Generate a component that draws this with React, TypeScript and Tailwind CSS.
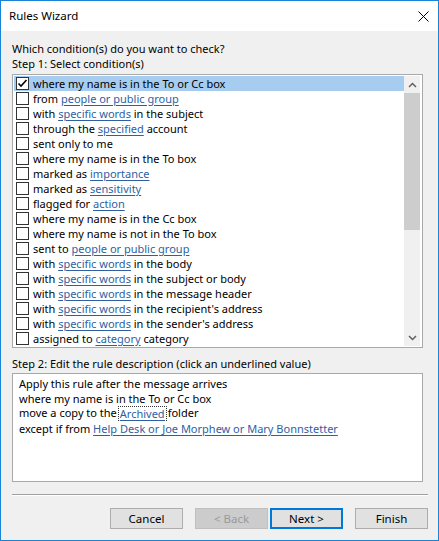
import React from 'react'

type Part = string | { link: string }

const conditions: Part[][] = [
  ['where my name is in the To or Cc box'],
  ['from ', { link: 'people or public group' }],
  ['with ', { link: 'specific words' }, ' in the subject'],
  ['through the ', { link: 'specified' }, ' account'],
  ['sent only to me'],
  ['where my name is in the To box'],
  ['marked as ', { link: 'importance' }],
  ['marked as ', { link: 'sensitivity' }],
  ['flagged for ', { link: 'action' }],
  ['where my name is in the Cc box'],
  ['where my name is not in the To box'],
  ['sent to ', { link: 'people or public group' }],
  ['with ', { link: 'specific words' }, ' in the body'],
  ['with ', { link: 'specific words' }, ' in the subject or body'],
  ['with ', { link: 'specific words' }, ' in the message header'],
  ['with ', { link: 'specific words' }, " in the recipient's address"],
  ['with ', { link: 'specific words' }, " in the sender's address"],
  ['assigned to ', { link: 'category' }, ' category'],
]

function Link({ children }: { children: React.ReactNode }) {
  return <span className="text-[#2e5fa3] underline underline-offset-[2px]">{children}</span>
}

function Checkbox({ checked }: { checked?: boolean }) {
  return (
    <span className="w-[13px] h-[13px] border border-[#333333] bg-white flex items-center justify-center shrink-0">
      {checked && (
        <svg width="11" height="11" viewBox="0 0 11 11">
          <path d="M1.5 5.5 L4 8 L9.5 2" fill="none" stroke="#000" strokeWidth="1.6" />
        </svg>
      )}
    </span>
  )
}

function Button({ children, disabled, focused }: { children: React.ReactNode; disabled?: boolean; focused?: boolean }) {
  const cls = disabled
    ? 'bg-[#cccccc] border border-[#bfbfbf] text-[#9a9a9a]'
    : focused
    ? 'bg-[#e1e1e1] border-2 border-[#0078d7] text-black'
    : 'bg-[#e1e1e1] border border-[#adadad] text-black'
  return (
    <div className={`w-[73px] h-[21px] flex items-center justify-center text-[11.5px] ${cls}`}>{children}</div>
  )
}

export default function App() {
  return (
    <div
      className="w-[439px] h-[541px] border border-[#1883d7] bg-[#f0f0f0] flex flex-col text-[11px] text-black"
      style={{ fontFamily: '"Segoe UI", "Noto Sans", sans-serif' }}
    >
      {/* Title bar */}
      <div className="h-[30px] bg-white flex items-center justify-between pl-[8px] pr-[9px] shrink-0">
        <span className="text-[11.5px]">Rules Wizard</span>
        <svg width="11" height="11" viewBox="0 0 11 11">
          <path d="M0.5 0.5 L10.5 10.5 M10.5 0.5 L0.5 10.5" stroke="#000" strokeWidth="1" />
        </svg>
      </div>

      <div className="flex-1 flex flex-col pl-[11px] pr-[10px] pt-[10px]">
        <div className="leading-[15px]">Which condition(s) do you want to check?</div>
        <div className="leading-[15px]">Step 1: Select condition(s)</div>

        {/* Conditions list */}
        <div className="mt-[3px] w-[411px] h-[274px] border border-[#a9a9a9] bg-white p-[1px] flex">
          <div className="flex-1 flex flex-col">
            {conditions.map((parts, i) => (
              <div
                key={i}
                className={`h-[15px] flex items-center pl-[2px] leading-[15px] whitespace-nowrap ${i === 0 ? 'bg-[#a6cdf0]' : ''}`}
              >
                <Checkbox checked={i === 0} />
                <span className="ml-[4px] leading-[14px]">
                  {parts.map((p, j) =>
                    typeof p === 'string' ? <span key={j}>{p}</span> : <Link key={j}>{p.link}</Link>
                  )}
                </span>
              </div>
            ))}
          </div>
          <div className="w-[16px] mr-[1px] bg-[#f0f0f0] flex flex-col">
            <div className="h-[17px] flex items-center justify-center">
              <svg width="9" height="6" viewBox="0 0 9 6">
                <path d="M1 5 L4.5 1.5 L8 5" fill="none" stroke="#606060" strokeWidth="1.5" />
              </svg>
            </div>
            <div className="h-[137px] bg-[#cdcdcd]" />
            <div className="flex-1" />
            <div className="h-[17px] flex items-center justify-center">
              <svg width="9" height="6" viewBox="0 0 9 6">
                <path d="M1 1 L4.5 4.5 L8 1" fill="none" stroke="#606060" strokeWidth="1.5" />
              </svg>
            </div>
          </div>
        </div>

        <div className="mt-[8px] leading-[15px]">Step 2: Edit the rule description (click an underlined value)</div>

        {/* Description box */}
        <div className="mt-[2px] w-[411px] h-[109px] border border-[#a9a9a9] bg-white pt-[2px] pl-[6px] flex flex-col">
          <div className="leading-[15px]">Apply this rule after the message arrives</div>
          <div className="leading-[15px]">where my name is in the To or Cc box</div>
          <div className="h-[15px] flex items-center">
            <span>move a copy to the</span>
            <span className="mx-[1px] border border-dotted border-[#333] px-[1px] leading-[13px]">
              <Link>Archived</Link>
            </span>
            <span>folder</span>
          </div>
          <div className="leading-[15px]">
            except if from <Link>Help Desk or Joe Morphew or Mary Bonnstetter</Link>
          </div>
        </div>

        <div className="mt-[12px] h-[2px] border-t border-[#a0a0a0] border-b border-b-white" />

        <div className="mt-[12px] flex justify-end">
          <Button>Cancel</Button>
          <div className="ml-[12px] flex gap-[2px]">
            <Button disabled>&lt; Back</Button>
            <Button focused>Next &gt;</Button>
          </div>
          <div className="ml-[12px]">
            <Button>Finish</Button>
          </div>
        </div>
      </div>
    </div>
  )
}
